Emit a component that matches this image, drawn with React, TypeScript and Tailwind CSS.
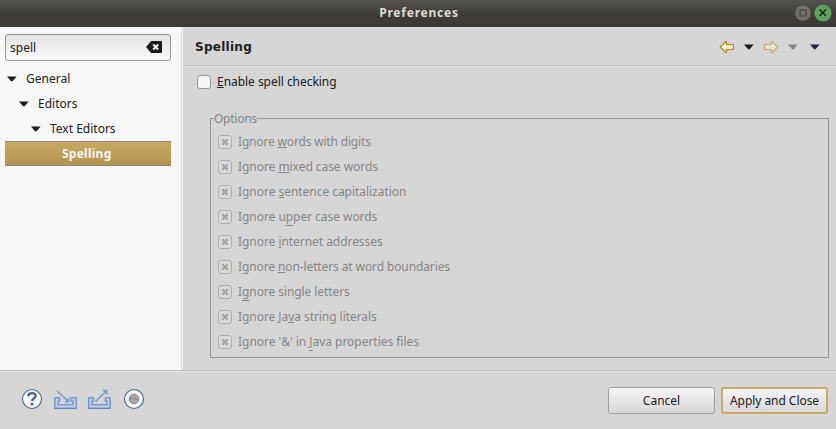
import React from "react";

type Option = { before: string; key: string; after: string; low?: boolean; tracking: string };

const options: Option[] = [
  { before: "Ignore ", key: "w", after: "ords with digits", tracking: "tracking-[-0.17px]" },
  { before: "Ignore ", key: "m", after: "ixed case words", tracking: "tracking-[-0.05px]" },
  { before: "Ignore ", key: "s", after: "entence capitalization", tracking: "tracking-[-0.04px]" },
  { before: "Ignore u", key: "p", after: "per case words", low: true, tracking: "tracking-[-0.05px]" },
  { before: "Ignore ", key: "i", after: "nternet addresses", tracking: "tracking-[-0.05px]" },
  { before: "Ignore ", key: "n", after: "on-letters at word boundaries", tracking: "tracking-[-0.11px]" },
  { before: "I", key: "g", after: "nore single letters", low: true, tracking: "tracking-[-0.08px]" },
  { before: "Ignore Ja", key: "v", after: "a string literals", tracking: "tracking-[-0.06px]" },
  { before: "Ignore '&' in ", key: "J", after: "ava properties files", low: true, tracking: "tracking-[-0.03px]" },
];

function Caret({ className = "text-[#1c1c1c]" }: { className?: string }) {
  return (
    <svg className={`block h-[6px] w-[10px] shrink-0 ${className}`} viewBox="0 0 10 6">
      <path d="M0 .5h9.6L5.6 5.3H4Z" fill="currentColor" />
    </svg>
  );
}

function Mnemonic({ before, letter, after, low, className = "" }: { before: string; letter: string; after: string; low?: boolean; className?: string }) {
  return (
    <span className={`whitespace-pre ${className}`}>
      {before}
      <span
        className={`underline decoration-1 [text-decoration-skip-ink:none] ${low ? "underline-offset-[4px]" : "underline-offset-[1px]"}`}
      >
        {letter}
      </span>
      {after}
    </span>
  );
}

function TreeRow({ label, className }: { label: string; className: string }) {
  return (
    <div className={`flex h-[25px] items-center gap-[9px] ${className}`}>
      <Caret />
      <span>{label}</span>
    </div>
  );
}

function ArrowIcon({ className = "" }: { className?: string }) {
  return (
    <svg className={`block h-[14px] w-4 ${className}`} viewBox="0 0 16 14">
      <path
        d="M1.3 7 6.8 1.4 7.5 1.8V4.5H14.4V9.5H7.5V12.2L6.8 12.6Z"
        fill="#fff6cf"
        stroke="#b87f12"
        strokeWidth="1.2"
        strokeLinejoin="round"
      />
    </svg>
  );
}

function Tray() {
  return (
    <g>
      <path d="M.5 8.5H6V12.5H4.5V15.5H18.5V12.5H17V8.5H22.5V19.5H.5Z" fill="#8fa9d6" stroke="#7c98c9" />
      <path d="M4.5 10.5H2.5V17.5H20.5V10.5H18.5" fill="none" stroke="#c3d2ec" strokeWidth="1.3" />
      <path d="M.5 19.5H22.5" stroke="#6684ba" />
    </g>
  );
}

export default function App() {
  return (
    <div className="flex h-[429px] w-[836px] flex-col overflow-hidden bg-[#d6d6d6] font-['Noto_Sans',sans-serif] text-[12px] leading-4 text-[#202020]">
      <header className="grid h-[27px] shrink-0 grid-cols-[1fr_auto_1fr] items-center bg-linear-to-b from-[#53524c] to-[#3c3b37] to-60%">
        <span />
        <h1 className="pt-px pb-[3px] pl-[2px] text-[12px] font-bold tracking-[0.78px] text-[#dfdbd2]">Preferences</h1>
        <div className="flex items-center justify-end gap-[2px] pr-[4px] pb-[2px]">
          <svg className="mt-px size-[18px]" viewBox="0 0 18 18">
            <circle cx="9" cy="9" r="8" fill="#74726b" stroke="#4f4e49" />
            <path d="M6 6h6v6H6Z" fill="none" stroke="#3c3b37" strokeWidth="1.1" />
          </svg>
          <svg className="size-[18px]" viewBox="0 0 18 18">
            <circle cx="9" cy="9" r="8.6" fill="#5ea35c" />
            <path d="m5.6 5.6 6.4 6.4m0-6.4L5.6 12" stroke="#142314" strokeWidth="1.4" />
          </svg>
        </div>
      </header>

      <main className="flex h-[343px] shrink-0">
        <aside className="w-[183px] shrink-0 border-r border-[#f4f4f4] bg-[#f7f7f7]">
          <div className="h-full w-[182px] border-r border-[#dcdcdc] pt-[7px]">
            <div className="ml-[5px] flex h-[27px] w-[166px] items-center justify-between rounded-[3px] border border-[#979797] bg-linear-to-b from-[#e4e4e4] to-[#f8f8f8] pr-2 pl-1">
              <span>spell</span>
              <svg className="-mt-px block h-3 w-4" viewBox="0 0 16 12">
                <path d="M0 6 5 0h10q1 0 1 1v10q0 1-1 1H5Z" fill="#1b1b1b" />
                <path d="m7.2 3.5 5 5m0-5-5 5" stroke="#f2f2f2" strokeWidth="2" />
              </svg>
            </div>
            <nav className="pt-[5px]">
              <TreeRow label="General" className="pl-[7px]" />
              <TreeRow label="Editors" className="pl-[19px]" />
              <TreeRow label="Text Editors" className="pl-[31px]" />
              <div className="ml-[5px] flex h-[25px] w-[166px] items-center border-y border-[#8c8878] bg-linear-to-b from-[#c8aa64] to-[#b2944e] pl-[57px] font-bold tracking-[0.25px] text-[#f7f7f7]">
                Spelling
              </div>
            </nav>
          </div>
        </aside>

        <section className="flex min-w-0 flex-1 flex-col">
          <div className="flex h-[39px] shrink-0 items-center justify-between border-b border-[#c3c3c3] pr-[16px] pl-[12px]">
            <h2 className="pt-[2px] font-['DejaVu_Sans',sans-serif] text-[12px] font-bold tracking-[0.27px]">Spelling</h2>
            <div className="flex items-center pt-[2px]">
              <ArrowIcon />
              <Caret className="ml-[9px] text-[#1c1c1c]" />
              <ArrowIcon className="ml-[9px] -scale-x-100 opacity-50" />
              <Caret className="ml-[9px] text-[#858585]" />
              <Caret className="ml-[12px] text-[#2c2340]" />
            </div>
          </div>
          <div className="border-t border-[#e3e3e3] pt-[7px] pl-[14px]">
            <label className="flex h-4 items-center gap-[6px]">
              <span className="size-[14px] rounded-[3px] border border-[#969696] bg-[#f5f5f5]" />
              <Mnemonic before="" letter="E" after="nable spell checking" className="tracking-[-0.04px]" />
            </label>
            <fieldset className="mt-[20px] ml-[13px] h-[248px] w-[619px] border border-[#949494] pl-[7px] text-[#858585]">
              <legend className="-ml-[4px] h-[17px] leading-[17px] tracking-[-0.25px]">Options</legend>
              <div className="pt-[2px]">
                {options.map((o) => (
                  <div key={o.before + o.key + o.after} className="flex h-[25px] items-center gap-[6px]">
                    <span className="grid size-[14px] shrink-0 place-items-center rounded-[3px] border border-[#adadad] bg-[#dadada]">
                      <svg className="block size-[8px]" viewBox="0 0 8 8">
                        <path d="m1.3 1.3 5.4 5.4m0-5.4L1.3 6.7" stroke="#a5a5a5" strokeWidth="2.3" />
                      </svg>
                    </span>
                    <Mnemonic before={o.before} letter={o.key} after={o.after} low={o.low} className={o.tracking} />
                  </div>
                ))}
              </div>
            </fieldset>
          </div>
        </section>
      </main>

      <footer className="flex h-[59px] shrink-0 items-center justify-between border-t border-[#bdbdbd] pr-[8px] pb-[2px] pl-[21px] shadow-[inset_0_1px_0_#e5e5e5]">
        <div className="flex items-center">
          <svg className="size-[22px]" viewBox="0 0 22 22">
            <circle cx="11" cy="11" r="9.5" fill="#f5f5f5" stroke="#4c6287" strokeWidth="1.1" />
            <path d="M7.3 8.2C7.4 4.2 14.9 4.2 14.6 8c-.2 2.4-3.5 2.5-3.5 5" fill="none" stroke="#4c6287" strokeWidth="2.4" />
            <circle cx="11" cy="16" r="1.5" fill="#4c6287" />
          </svg>
          <svg className="ml-[11px] h-[20px] w-[23px]" viewBox="0 0 23 20">
            <Tray />
            <path d="m3 2 10.5 9.5" stroke="#69a0c8" strokeWidth="1.4" />
            <path d="M15.5 13.5V8.3L10.3 13.5Z" fill="#69a0c8" />
          </svg>
          <svg className="ml-[11px] h-[20px] w-[23px]" viewBox="0 0 23 20">
            <Tray />
            <path d="M7.5 12.5 18 2.5" stroke="#69a0c8" strokeWidth="1.4" />
            <path d="M19.5 .8v5.4L14.1 .8Z" fill="#69a0c8" />
          </svg>
          <svg className="ml-[12px] size-[22px]" viewBox="0 0 22 22">
            <circle cx="11" cy="11" r="9.5" fill="#f3f3f3" stroke="#4c6287" strokeWidth="1.1" />
            <circle cx="11" cy="11" r="4.7" fill="#a8a8a8" stroke="#808080" />
            <path d="M7 11h8" stroke="#8c8c8c" />
          </svg>
        </div>
        <div className="flex gap-[6px] pt-[2px]">
          <button className="h-[27px] w-[107px] rounded-[3px] border border-[#9f9f9f] bg-linear-to-b from-[#f5f5f5] to-[#d8d8d8] pt-px">
            Cancel
          </button>
          <button className="h-[27px] w-[107px] rounded-[3px] border-2 border-[#c8aa62] bg-linear-to-b from-[#f5f5f5] to-[#d8d8d8] pt-px tracking-[-0.05px] whitespace-nowrap">
            Apply and Close
          </button>
        </div>
      </footer>
    </div>
  );
}
